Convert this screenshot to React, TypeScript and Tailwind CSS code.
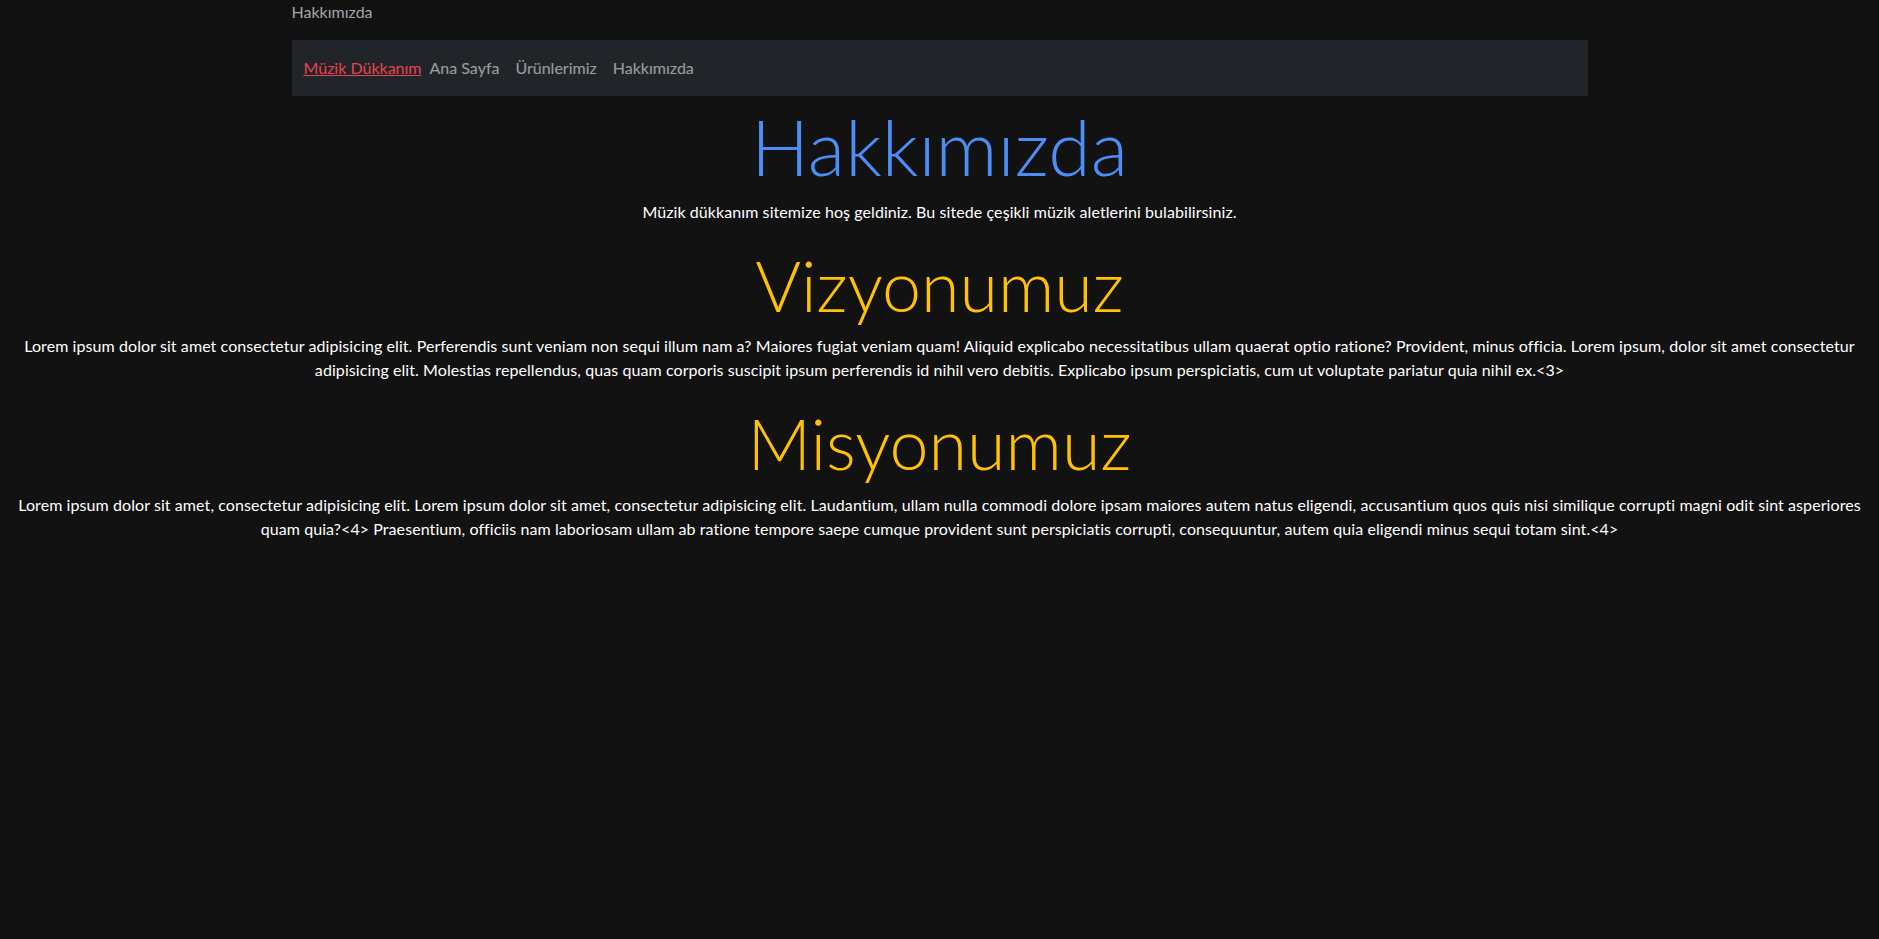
import React from "react";

const links = ["Ana Sayfa", "Ürünlerimiz", "Hakkımızda"];

export default function App() {
  return (
    <div className="min-h-screen bg-[#121212] text-white font-['Lato','Noto_Sans',sans-serif] text-base leading-6">
      <div className="mx-auto max-w-[1320px] px-3">
        <div className="text-[#a0a7ae]">Hakkımızda</div>
        <nav className="mt-4 flex h-14 items-center bg-[#212529] px-3">
          <a href="#" className="text-[#e9434f] underline">
            Müzik Dükkanım
          </a>
          <ul className="flex">
            {links.map((l) => (
              <li key={l}>
                <a href="#" className="block px-2 py-2 text-white/55">
                  {l}
                </a>
              </li>
            ))}
          </ul>
        </nav>
      </div>

      <main className="px-3 text-center tracking-[0.08px]">
        <h1 className="mb-2 pt-[5px] text-[77px] font-light leading-[91px] tracking-normal text-[#4c8df6]">Hakkımızda</h1>
        <p className="mb-4">
          Müzik dükkanım sitemize hoş geldiniz. Bu sitede çeşikli müzik aletlerini bulabilirsiniz.
        </p>

        <h1 className="mb-2 pt-[4.6px] text-[70px] font-light leading-[81.8px] tracking-normal text-[#ffc107]">Vizyonumuz</h1>
        <p className="mb-4">
          Lorem ipsum dolor sit amet consectetur adipisicing elit. Perferendis sunt veniam non sequi illum nam a? Maiores
          fugiat veniam quam! Aliquid explicabo necessitatibus ullam quaerat optio ratione? Provident, minus officia.
          Lorem ipsum, dolor sit amet consectetur adipisicing elit. Molestias repellendus, quas quam corporis suscipit
          ipsum perferendis id nihil vero debitis. Explicabo ipsum perspiciatis, cum ut voluptate pariatur quia nihil
          ex.&lt;3&gt;
        </p>

        <h1 className="mb-2 pt-[4.6px] text-[70px] font-light leading-[81.8px] tracking-normal text-[#ffc107]">Misyonumuz</h1>
        <p className="mb-4">
          Lorem ipsum dolor sit amet, consectetur adipisicing elit. Lorem ipsum dolor sit amet, consectetur adipisicing
          elit. Laudantium, ullam nulla commodi dolore ipsam maiores autem natus eligendi, accusantium quos quis nisi
          similique corrupti magni odit sint asperiores quam quia?&lt;4&gt; Praesentium, officiis nam laboriosam ullam ab
          ratione tempore saepe cumque provident sunt perspiciatis corrupti, consequuntur, autem quia eligendi minus
          sequi totam sint.&lt;4&gt;
        </p>
      </main>
    </div>
  );
}
